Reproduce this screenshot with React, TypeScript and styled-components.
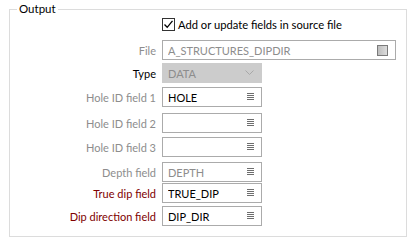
import React from 'react';
import styled, { createGlobalStyle } from 'styled-components';

const Global = createGlobalStyle`
  html, body {
    margin: 0;
    padding: 0;
    background: #ffffff;
    font-family: Lato, "Liberation Sans", sans-serif;
    font-size: 11px;
  }
`;

const Page = styled.div`
  width: 416px;
  height: 244px;
  padding: 2px 0 0 9px;
  box-sizing: border-box;
`;

const Group = styled.fieldset`
  width: 398px;
  height: 235px;
  margin: 0;
  padding: 0;
  box-sizing: border-box;
  border: 1px solid #dcdcdc;
`;

const Legend = styled.legend`
  margin-left: 7px;
  padding: 0 2px;
  font-size: 11.5px;
  line-height: 14px;
  color: #000;
`;

const Form = styled.div`
  display: flex;
  flex-direction: column;
`;

const Row = styled.div<{ $top: number }>`
  display: grid;
  grid-template-columns: 146px auto;
  column-gap: 6px;
  align-items: center;
  margin-top: ${(p) => p.$top}px;
`;

const Label = styled.span<{ $tone?: 'muted' | 'normal' | 'required' }>`
  text-align: right;
  white-space: nowrap;
  color: ${(p) =>
    p.$tone === 'required' ? '#800000' : p.$tone === 'normal' ? '#000000' : '#8d8d8d'};
`;

const CheckLine = styled.label`
  display: flex;
  align-items: center;
  gap: 3px;
  color: #000;
  white-space: nowrap;
  font-size: 11.2px;
`;

const CheckBox = styled.span`
  width: 13px;
  height: 13px;
  box-sizing: border-box;
  border: 1px solid #333333;
  background: #fff;
  display: flex;
  align-items: center;
  justify-content: center;
`;

const Field = styled.div<{ $width: number; $disabled?: boolean }>`
  width: ${(p) => p.$width}px;
  height: 20px;
  box-sizing: border-box;
  border: 1px solid #ababab;
  background: #fff;
  display: flex;
  align-items: center;
  padding: 0 7px 0 5px;
  color: ${(p) => (p.$disabled ? '#8d8d8d' : '#000')};
`;

const Combo = styled.div`
  width: 100px;
  height: 20px;
  box-sizing: border-box;
  border: 1px solid #cccccc;
  background: #cccccc;
  display: flex;
  align-items: center;
  padding: 0 7px 0 5px;
  color: #8d8d8d;
`;

const Value = styled.span`
  flex: 1;
  white-space: nowrap;
  overflow: hidden;
`;

const BrowseBox = styled.span`
  width: 11px;
  height: 11px;
  box-sizing: border-box;
  border: 1px solid #7a7a7a;
  background: linear-gradient(90deg, #bdbdbd, #dcdcdc);
`;

const ListIcon = () => (
  <svg width="7" height="8" viewBox="0 0 7 8">
    {[0.5, 2.5, 4.5, 6.5].map((y) => (
      <line key={y} x1="0" x2="7" y1={y} y2={y} stroke="#6e6e6e" strokeWidth="1" />
    ))}
  </svg>
);

const Chevron = () => (
  <svg width="9" height="6" viewBox="0 0 9 6">
    <polyline points="0.5,0.5 4.5,4.5 8.5,0.5" fill="none" stroke="#a8a8a8" strokeWidth="1" />
  </svg>
);

const Check = () => (
  <svg width="11" height="11" viewBox="0 0 11 11">
    <polyline points="1.5,5.5 4.2,8.3 9.5,1.8" fill="none" stroke="#000" strokeWidth="1.3" />
  </svg>
);

type FieldRow = { label: string; value: string; top: number; tone?: 'muted' | 'normal' | 'required'; dim?: boolean };

const fieldRows: FieldRow[] = [
  { label: 'Hole ID field 1', value: 'HOLE', top: 4 },
  { label: 'Hole ID field 2', value: '', top: 6 },
  { label: 'Hole ID field 3', value: '', top: 4 },
  { label: 'Depth field', value: 'DEPTH', top: 5, dim: true },
  { label: 'True dip field', value: 'TRUE_DIP', top: 1, tone: 'required' },
  { label: 'Dip direction field', value: 'DIP_DIR', top: 3, tone: 'required' },
];

export default function App() {
  return (
    <>
      <Global />
      <Page>
        <Group>
          <Legend>Output</Legend>
          <Form>
            <Row $top={2}>
              <span />
              <CheckLine>
                <CheckBox>
                  <Check />
                </CheckBox>
                Add or update fields in source file
              </CheckLine>
            </Row>
            <Row $top={9}>
              <Label>File</Label>
              <Field $width={234} $disabled>
                <Value>A_STRUCTURES_DIPDIR</Value>
                <BrowseBox />
              </Field>
            </Row>
            <Row $top={3}>
              <Label $tone="normal">Type</Label>
              <Combo>
                <Value>DATA</Value>
                <Chevron />
              </Combo>
            </Row>
            {fieldRows.map((r) => (
              <Row key={r.label} $top={r.top}>
                <Label $tone={r.tone}>{r.label}</Label>
                <Field $width={100} $disabled={r.dim}>
                  <Value>{r.value}</Value>
                  <ListIcon />
                </Field>
              </Row>
            ))}
          </Form>
        </Group>
      </Page>
    </>
  );
}
